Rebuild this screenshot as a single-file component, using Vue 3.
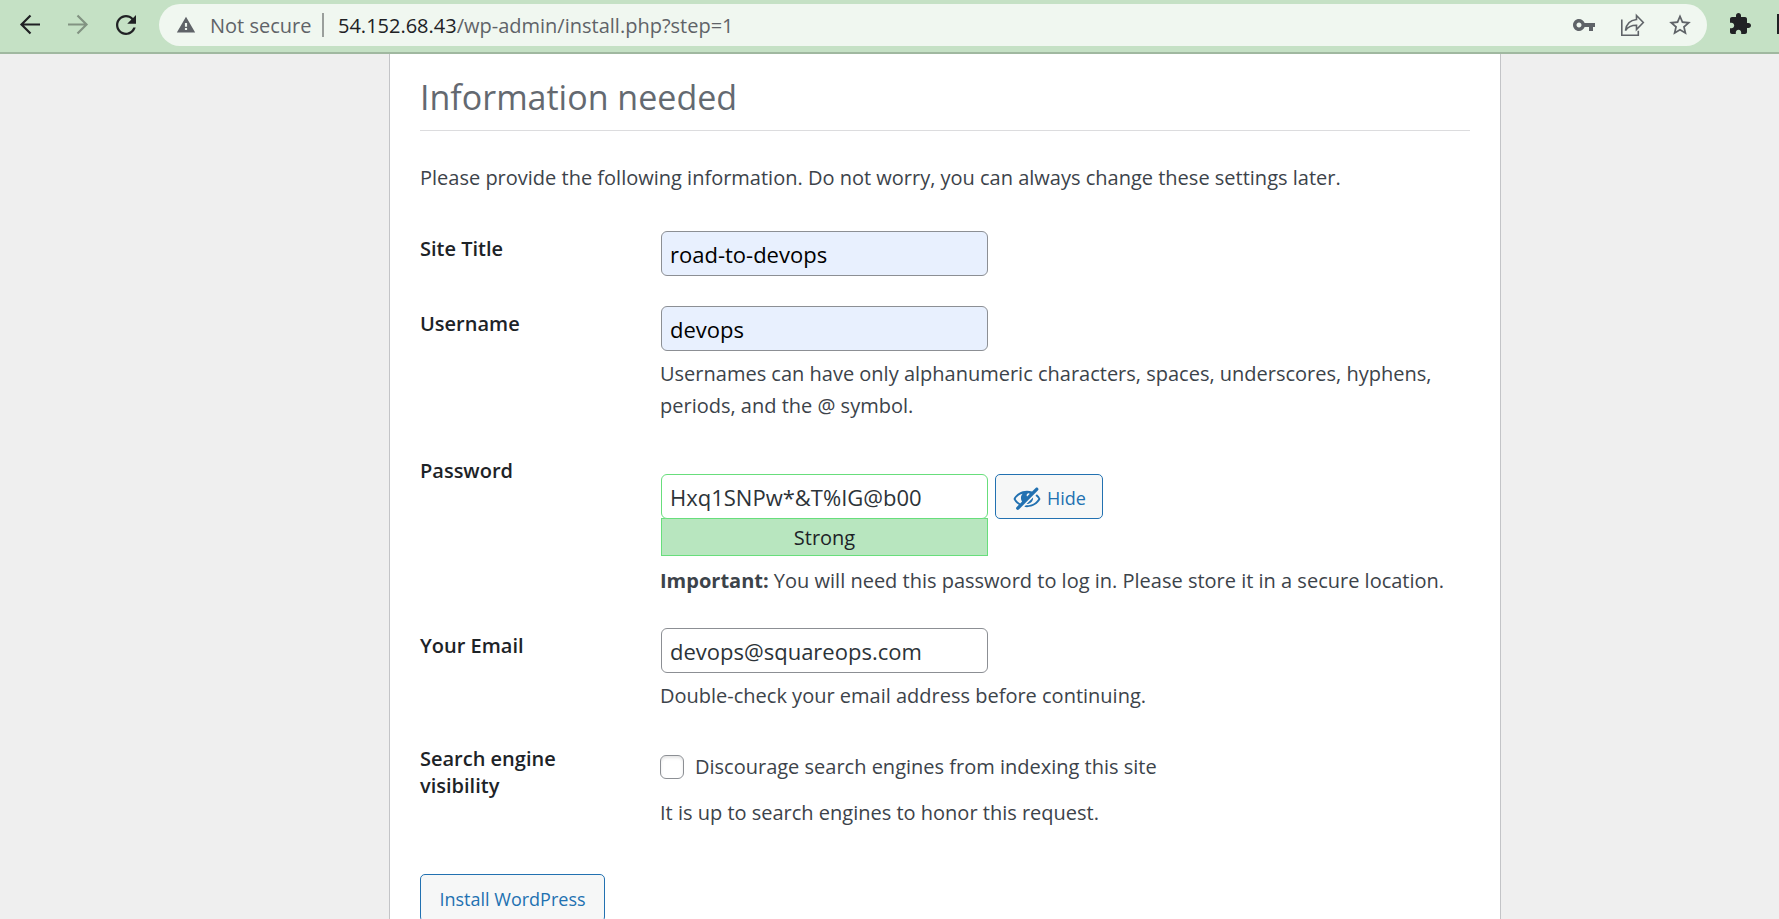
<script setup>
import { ref } from 'vue'

const siteTitle = ref('road-to-devops')
const username = ref('devops')
const password = ref('Hxq1SNPw*&T%IG@b00')
const email = ref('devops@squareops.com')
const discourage = ref(false)
</script>

<template>
  <div class="browser">
    <header class="toolbar">
      <nav class="nav">
        <button type="button" class="tool" aria-label="Back">
          <svg width="24" height="24" viewBox="0 0 24 24" fill="none" stroke="#202124" stroke-width="2.2"><path d="M22 12.5H3.5M12.5 3.5l-9 9 9 9" /></svg>
        </button>
        <button type="button" class="tool" aria-label="Forward">
          <svg width="24" height="24" viewBox="0 0 24 24" fill="none" stroke="#829382" stroke-width="2.2"><path d="M2 12.5h18.5M11.500 3.500l9 9-9 9" /></svg>
        </button>
        <button type="button" class="tool" aria-label="Reload">
          <svg width="30" height="30" viewBox="0 -0.8 24 24" fill="#202124"><path d="M17.650 6.350C16.200 4.900 14.210 4 12 4c-4.420 0-7.990 3.580-7.990 8s3.570 8 7.990 8c3.730 0 6.840-2.550 7.730-6h-1.900c-.82 2.330-3.220 4.200-5.830 4.200-3.310 0-6.200-2.890-6.200-6.200s2.890-6.200 6.200-6.200c1.660 0 3.240.69 4.320 1.780L13 11h7V4l-2.350 2.350z" /></svg>
        </button>
      </nav>
      <div class="omnibox">
        <svg class="warn" width="20" height="20" viewBox="0 0 24 24" fill="#5f6368"><path d="M1 21h22L12 2 1 21zm12.300-3h-2.600v-2.300h2.600V18zm0-4h-2.600V9.500h2.600V14z" /></svg>
        <span class="insecure">Not secure</span>
        <span class="divider"></span>
        <span class="url"><span class="host">54.152.68.43</span>/wp-admin/install.php?step=1</span>
        <button type="button" class="tool" aria-label="Saved passwords">
          <svg width="24" height="24" viewBox="0 0 24 24" fill="#5f6368"><path d="M12.650 10C11.830 7.670 9.610 6 7 6c-3.310 0-6 2.690-6 6s2.690 6 6 6c2.610 0 4.830-1.670 5.650-4H17v4h4v-4h2v-4H12.650zM7 14.500c-1.380 0-2.500-1.120-2.500-2.500S5.620 9.500 7 9.500s2.500 1.120 2.500 2.500-1.120 2.500-2.500 2.500z" /></svg>
        </button>
        <button type="button" class="tool" aria-label="Share">
          <svg width="26" height="26" viewBox="0 0 26 26" fill="none" stroke="#5f6368" stroke-width="1.600"><path d="M2.800 7.500v15.700h16.500v-4.500" /><path d="M17.500 3.500l6.800 7-6.800 7v-4.200c-5 0-8.500 1.200-11 5.200.6-5.500 4-10.300 11-11V3.500z" stroke-linejoin="miter" /></svg>
        </button>
        <button type="button" class="tool" aria-label="Bookmark this page">
          <svg width="26" height="26" viewBox="0 0 24 24" fill="#5f6368"><path d="M22 9.240l-7.190-.62L12 2 9.190 8.630 2 9.240l5.460 4.730L5.820 21 12 17.270 18.180 21l-1.630-7.030L22 9.240zM12 15.400l-3.760 2.270 1-4.280-3.320-2.880 4.380-.38L12 6.100l1.710 4.040 4.380.38-3.320 2.880 1 4.280L12 15.400z" /></svg>
        </button>
      </div>
      <button type="button" class="tool extensions" aria-label="Extensions">
        <svg width="24" height="24" viewBox="0 0 24 24" fill="#202124"><path d="M20.500 11H19V7c0-1.100-.9-2-2-2h-4V3.500C13 2.120 11.880 1 10.500 1S8 2.120 8 3.500V5H4c-1.100 0-1.990.9-1.990 2v3.800H3.500c1.490 0 2.700 1.210 2.700 2.700s-1.210 2.700-2.700 2.700H2V20c0 1.100.9 2 2 2h3.800v-1.500c0-1.490 1.210-2.700 2.700-2.700s2.700 1.210 2.700 2.700V22H17c1.100 0 2-.9 2-2v-4h1.500c1.380 0 2.500-1.120 2.500-2.500S21.880 11 20.500 11z" /></svg>
      </button>
      <span class="panel-edge"></span>
    </header>

    <main class="page">
      <form class="card" @submit.prevent>
        <h1>Information needed</h1>
        <p class="intro">Please provide the following information. Do not worry, you can always change these settings later.</p>

        <div class="row">
          <label class="name" for="title">Site Title</label>
          <div class="field">
            <input id="title" v-model="siteTitle" class="text filled" type="text" />
          </div>
        </div>

        <div class="row tall">
          <label class="name" for="user">Username</label>
          <div class="field">
            <input id="user" v-model="username" class="text filled" type="text" />
            <p class="hint">Usernames can have only alphanumeric characters, spaces, underscores, hyphens, periods, and the @ symbol.</p>
          </div>
        </div>

        <div class="row tall">
          <label class="name" for="pass">Password</label>
          <div class="field password">
            <div class="pass-line">
              <input id="pass" v-model="password" class="text strong-pass" type="text" spellcheck="false" />
              <button type="button" class="button hide">
                <svg width="30" height="30" viewBox="0 0 20 20" fill="#2271b1"><path d="M17.200 3.300l.16.17c.39.39.39 1.020 0 1.410L4.550 17.700c-.39.39-1.030.39-1.410 0l-.17-.17c-.39-.39-.39-1.020 0-1.410l1.590-1.600c-1.570-1-2.760-2.300-3.560-3.930.81-1.650 2.030-2.980 3.640-3.990S8.040 5.090 10 5.090c1.200 0 2.330.21 3.400.6l2.380-2.390c.39-.39 1.030-.39 1.420 0zm-7.090 4.010c-.23.25-.34.54-.34.88 0 .31.12.58.31.81l1.800-1.790c-.13-.12-.28-.21-.45-.26-.11-.01-.28-.03-.49-.04-.33.03-.6.16-.83.4zM2.400 10.590c.69 1.230 1.710 2.250 3.050 3.050l1.280-1.280c-.51-.69-.77-1.470-.77-2.360 0-1.060.36-1.980 1.090-2.760-1.040.27-1.960.7-2.760 1.260-.8.58-1.430 1.270-1.890 2.090zm13.220-2.130l.96-.96c1.020.86 1.830 1.890 2.420 3.090-.81 1.650-2.030 2.980-3.640 3.990s-3.400 1.510-5.360 1.510c-.63 0-1.240-.07-1.830-.18l1.070-1.070c.25.02.5.05.76.05 1.630 0 3.130-.4 4.500-1.210s2.400-1.840 3.100-3.120c-.46-.8-1.120-1.500-1.980-2.100zm-5.900 5.500l4.310-4.310c.01.08.02.18.02.28 0 1.120-.42 2.100-1.240 2.900-.82.81-1.790 1.210-2.910 1.210-.06 0-.12-.05-.18-.08z" /></svg>
                Hide
              </button>
            </div>
            <div class="meter">Strong</div>
            <p class="hint"><strong>Important:</strong> You will need this password to log in. Please store it in a secure location.</p>
          </div>
        </div>

        <div class="row">
          <label class="name" for="email">Your Email</label>
          <div class="field">
            <input id="email" v-model="email" class="text" type="email" />
            <p class="hint">Double-check your email address before continuing.</p>
          </div>
        </div>

        <div class="row">
          <span class="name">Search engine visibility</span>
          <div class="field visibility">
            <label class="check"><input v-model="discourage" type="checkbox" />Discourage search engines from indexing this site</label>
            <p>It is up to search engines to honor this request.</p>
          </div>
        </div>

        <button type="submit" class="button install">Install WordPress</button>
      </form>
    </main>
  </div>
</template>

<style>
html, body, #app { height: 100%; }
body { margin: 0; overflow: hidden; background: #efefef; }
</style>

<style scoped>
* { box-sizing: border-box; }
.browser {
  display: flex;
  flex-direction: column;
  height: 100%;
  font-family: "Open Sans", "Noto Sans", sans-serif;
  font-size: 20px;
  color: #3c434a;
}
.toolbar {
  display: flex;
  align-items: center;
  flex: none;
  height: 54px;
  padding: 0 0 4px 6px;
  border-bottom: 2px solid #a0b8a0;
  background: #c5e1c5;
}
.nav { display: flex; margin-right: 9px; }
.tool {
  display: flex;
  align-items: center;
  justify-content: center;
  flex: none;
  width: 48px;
  height: 40px;
  padding: 0;
  border: 0;
  background: none;
}
.omnibox {
  display: flex;
  align-items: center;
  flex: 1;
  min-width: 0;
  height: 42px;
  margin-top: 2px;
  padding: 0 3px 0 17px;
  border-radius: 21px;
  background: #f0f7f0;
  color: #5f6368;
  white-space: nowrap;
}
.warn { flex: none; margin-right: 14px; }
.insecure { width: 112px; }
.divider { flex: none; width: 2px; height: 24px; margin-right: 14px; background: #9a9f9c; }
.url { flex: 1; min-width: 0; overflow: hidden; }
.host { color: #202124; }
.extensions { width: 66px; }
.panel-edge { flex: none; width: 2px; height: 20px; margin-left: 4px; background: #202124; }

.page { flex: 1; min-height: 0; overflow: hidden; padding-left: 111px; }
.card {
  max-width: 1112px;
  min-height: 100%;
  margin: 0 auto;
  padding: 19px 30px;
  border: solid #c3c4c7;
  border-width: 0 1px;
  background: #fff;
}
h1 {
  margin: 0 0 31px;
  padding-bottom: 9px;
  border-bottom: 1px solid #dcdcde;
  color: #646970;
  font-size: 34px;
  font-weight: 400;
  line-height: 48px;
}
p { margin: 0; line-height: 32px; }
.intro { margin-bottom: 22px; }
.row { display: flex; padding: 15px 0 14px; }
.row:first-of-type { padding-bottom: 15px; }
.tall { padding-bottom: 16px; }
.name {
  flex: none;
  width: 240px;
  padding: 4px 60px 0 0;
  color: #1d2327;
  font-weight: 600;
  line-height: 27px;
}
.field { flex: 1; min-width: 0; }
.text {
  display: block;
  width: 327px;
  height: 45px;
  margin: 0 0 0 1px;
  padding: 0 8px;
  border: 1px solid #8c8f94;
  border-radius: 6px;
  background: #fff;
  color: #2c3338;
  font: inherit;
  font-size: 22px;
}
.filled { background: #e8f0fe; color: #000; }
.hint { margin-top: 7px; }
.password { padding-top: 21px; }
.pass-line { display: flex; gap: 7px; }
.strong-pass { border-color: #68de7c; }
.meter {
  width: 327px;
  height: 38px;
  margin: -1px 0 9px 1px;
  border: 1px solid #68de7c;
  background: #b8e6bf;
  color: #1d2327;
  line-height: 38px;
  text-align: center;
}
.password .hint { margin-top: 0; }
.button {
  display: flex;
  align-items: center;
  justify-content: center;
  height: 45px;
  padding: 2px 0 0;
  border: 1px solid #2271b1;
  border-radius: 5px;
  background: #f6f7f7;
  color: #2271b1;
  font: inherit;
  font-size: 18px;
}
.hide { gap: 5px; width: 108px; }
.install { width: 185px; height: 48px; margin-top: 31px; }
.visibility { padding-top: 10px; }
.check { display: flex; align-items: center; margin-bottom: 14px; line-height: 32px; }
.check input {
  appearance: none;
  width: 24px;
  height: 24px;
  margin: 0 11px 0 0;
  border: 1px solid #8c8f94;
  border-radius: 6px;
  background: #fff;
  box-shadow: inset 0 2px 3px rgba(0, 0, 0, 0.1);
}
</style>
